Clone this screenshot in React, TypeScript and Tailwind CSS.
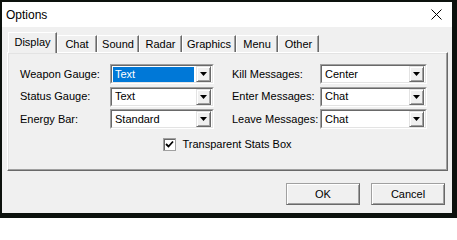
import React from "react";

const tabs = [
  { label: "Display", w: "w-[49px]" },
  { label: "Chat", w: "w-[40px]" },
  { label: "Sound", w: "w-[42px]" },
  { label: "Radar", w: "w-[43px]" },
  { label: "Graphics", w: "w-[54px]" },
  { label: "Menu", w: "w-[42px]" },
  { label: "Other", w: "w-[41px]" },
];

function Combo({ value, w, selected }: { value: string; w: string; selected?: boolean }) {
  return (
    <div className={`${w} h-[20px] flex border border-t-[#a0a0a0] border-l-[#a0a0a0] border-b-white border-r-white`}>
      <div className="flex-1 flex items-center bg-white border border-t-[#696969] border-l-[#696969] border-b-[#e3e3e3] border-r-[#e3e3e3] pr-px">
        <div
          className={`flex-1 h-[15px] flex items-center pl-[2px] ml-px ${
            selected ? "bg-[#0078d7] text-white" : "text-black"
          }`}
        >
          {value}
        </div>
        <div className="w-[15px] h-[16px] ml-[2px] flex items-center justify-center bg-[#f0f0f0] border border-t-[#e3e3e3] border-l-[#e3e3e3] border-b-[#696969] border-r-[#696969] shadow-[inset_1px_1px_0_#fff,inset_-1px_-1px_0_#a0a0a0]">
          <svg width="7" height="4" viewBox="0 0 7 4">
            <path d="M0 0H7L3.5 4Z" fill="#000" />
          </svg>
        </div>
      </div>
    </div>
  );
}

function Row({ l1, v1, l2, v2, sel }: { l1: string; v1: string; l2: string; v2: string; sel?: boolean }) {
  return (
    <div className="flex items-center h-[20px] pl-[12px]">
      <div className="w-[90px]">{l1}</div>
      <Combo value={v1} w="w-[104px]" selected={sel} />
      <div className="w-[88px] ml-[18px]">{l2}</div>
      <Combo value={v2} w="w-[107px]" />
    </div>
  );
}

function Button({ label }: { label: string }) {
  return (
    <div className="w-[74px] h-[22px] flex items-center justify-center bg-[#f0f0f0] border border-t-[#a0a0a0] border-l-[#a0a0a0] border-b-[#696969] border-r-[#696969] shadow-[inset_1px_1px_0_#fff,inset_-1px_-1px_0_#a0a0a0]">
      {label}
    </div>
  );
}

export default function App() {
  return (
    <div className="w-[457px] h-[218px] bg-[#0c110d] pt-[2px] pl-[2px] overflow-hidden font-['Liberation_Sans',Arial,sans-serif] text-[11px] text-black">
      <div className="w-[450px] h-[211px] bg-[#f0f0f0] flex flex-col">
        {/* title bar */}
        <div className="h-[25px] bg-white flex items-center justify-between pl-[4px] pr-[10px]">
          <span className="text-[12px] leading-none">Options</span>
          <svg width="11" height="11" viewBox="0 0 11 11">
            <path d="M0.5 0.5L10.5 10.5M10.5 0.5L0.5 10.5" stroke="#000" strokeWidth="1" />
          </svg>
        </div>

        {/* tabs */}
        <div className="flex items-end h-[20px] mt-[5px] ml-[6px] relative z-10">
          {tabs.map((t, i) =>
            i === 0 ? (
              <div
                key={t.label}
                className={`${t.w} h-[21px] -mb-px bg-[#f0f0f0] flex items-center justify-center pb-[2px] border-t border-l border-r border-t-white border-l-white border-r-[#696969] shadow-[inset_-1px_0_0_#a0a0a0]`}
              >
                {t.label}
              </div>
            ) : (
              <div
                key={t.label}
                className={`${t.w} h-[17px] bg-[#f0f0f0] flex items-center justify-center border-t border-l border-r border-t-white border-l-white border-r-[#696969] shadow-[inset_-1px_0_0_#a0a0a0]`}
              >
                {t.label}
              </div>
            )
          )}
        </div>

        {/* panel */}
        <div className="ml-[5px] w-[441px] h-[119px] border border-t-white border-l-white border-b-[#696969] border-r-[#696969] shadow-[inset_-1px_-1px_0_#a0a0a0,inset_1px_1px_0_#e3e3e3] pt-[11px] flex flex-col">
          <div className="flex flex-col gap-[2.5px]">
            <Row l1="Weapon Gauge:" v1="Text" l2="Kill Messages:" v2="Center" sel />
            <Row l1="Status Gauge:" v1="Text" l2="Enter Messages:" v2="Chat" />
            <Row l1="Energy Bar:" v1="Standard" l2="Leave Messages:" v2="Chat" />
          </div>
          <div className="flex items-center justify-center gap-[6px] mt-[9px] h-[13px]">
            <div className="w-[13px] h-[13px] bg-white border border-[#a0a0a0] shadow-[inset_1px_1px_0_#696969] flex items-center justify-center">
              <svg width="9" height="9" viewBox="0 0 9 9">
                <path d="M1 4L3.5 6.5L8 1.5" stroke="#000" strokeWidth="1.8" fill="none" />
              </svg>
            </div>
            <span>Transparent Stats Box</span>
          </div>
        </div>

        {/* buttons */}
        <div className="flex justify-end gap-[11px] mt-[12px] pr-[7px]">
          <Button label="OK" />
          <Button label="Cancel" />
        </div>
      </div>
    </div>
  );
}
